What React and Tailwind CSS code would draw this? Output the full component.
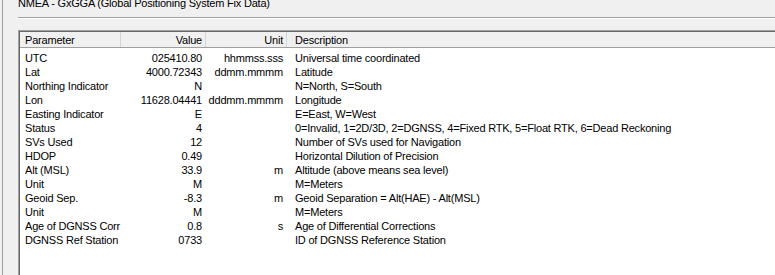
import React from 'react';

const rows = [
  ['UTC', '025410.80', 'hhmmss.sss', 'Universal time coordinated'],
  ['Lat', '4000.72343', 'ddmm.mmmm', 'Latitude'],
  ['Northing Indicator', 'N', '', 'N=North, S=South'],
  ['Lon', '11628.04441', 'dddmm.mmmm', 'Longitude'],
  ['Easting Indicator', 'E', '', 'E=East, W=West'],
  ['Status', '4', '', '0=Invalid, 1=2D/3D, 2=DGNSS, 4=Fixed RTK, 5=Float RTK, 6=Dead Reckoning'],
  ['SVs Used', '12', '', 'Number of SVs used for Navigation'],
  ['HDOP', '0.49', '', 'Horizontal Dilution of Precision'],
  ['Alt (MSL)', '33.9', 'm', 'Altitude (above means sea level)'],
  ['Unit', 'M', '', 'M=Meters'],
  ['Geoid Sep.', '-8.3', 'm', 'Geoid Separation = Alt(HAE) - Alt(MSL)'],
  ['Unit', 'M', '', 'M=Meters'],
  ['Age of DGNSS Corr', '0.8', 's', 'Age of Differential Corrections'],
  ['DGNSS Ref Station', '0733', '', 'ID of DGNSS Reference Station'],
];

export default function App() {
  return (
    <div className="w-[775px] h-[275px] overflow-hidden bg-[#f0f0f0] flex font-['Liberation_Sans',Arial,sans-serif] text-[11px] text-black tracking-[-0.2px]">
      <div className="w-[2px] shrink-0" />
      <div className="w-px shrink-0 bg-[#a0a0a0]" />
      <div className="w-[15px] shrink-0" />
      <div className="flex-1 flex flex-col min-w-0">
        {/* group title, clipped at top */}
        <div className="h-[17px] overflow-hidden">
          <div className="-mt-[4px] leading-[14px] whitespace-nowrap">NMEA - GxGGA (Global Positioning System Fix Data)</div>
        </div>
        <div className="border-t border-[#a0a0a0] border-b border-b-white" />
        <div className="h-[11px]" />

        {/* list view */}
        <div className="flex-1 border-t border-l border-[#a0a0a0] min-w-0">
          <div className="h-full border-t border-l border-[#696969] bg-white w-[800px]">
            <div className="flex h-[15px] bg-[#f0f0f0] pt-[2px] leading-[13px] whitespace-nowrap">
              <div className="w-[101px] shrink-0 pl-[5px] border-r border-[#d5d5d5] -mt-[2px] pt-[2px]">Parameter</div>
              <div className="w-[85px] shrink-0 pr-[3px] text-right border-r border-[#d5d5d5] -mt-[2px] pt-[2px]">Value</div>
              <div className="w-[81px] shrink-0 pr-[3px] text-right border-r border-[#d5d5d5] -mt-[2px] pt-[2px]">Unit</div>
              <div className="flex-1 pl-[8px]">Description</div>
            </div>
            <div className="h-px bg-[#a0a0a0]" />
            <div className="pt-[3px]">
              {rows.map((r, i) => (
                <div key={i} className="flex h-[14px] leading-[14px] whitespace-nowrap">
                  <div className="w-[101px] shrink-0 pl-[5px]">{r[0]}</div>
                  <div className="w-[85px] shrink-0 pr-[4px] text-right">{r[1]}</div>
                  <div className="w-[81px] shrink-0 pr-[4px] text-right">{r[2]}</div>
                  <div className="flex-1 pl-[8px]">{r[3]}</div>
                </div>
              ))}
            </div>
          </div>
        </div>
      </div>
    </div>
  );
}
